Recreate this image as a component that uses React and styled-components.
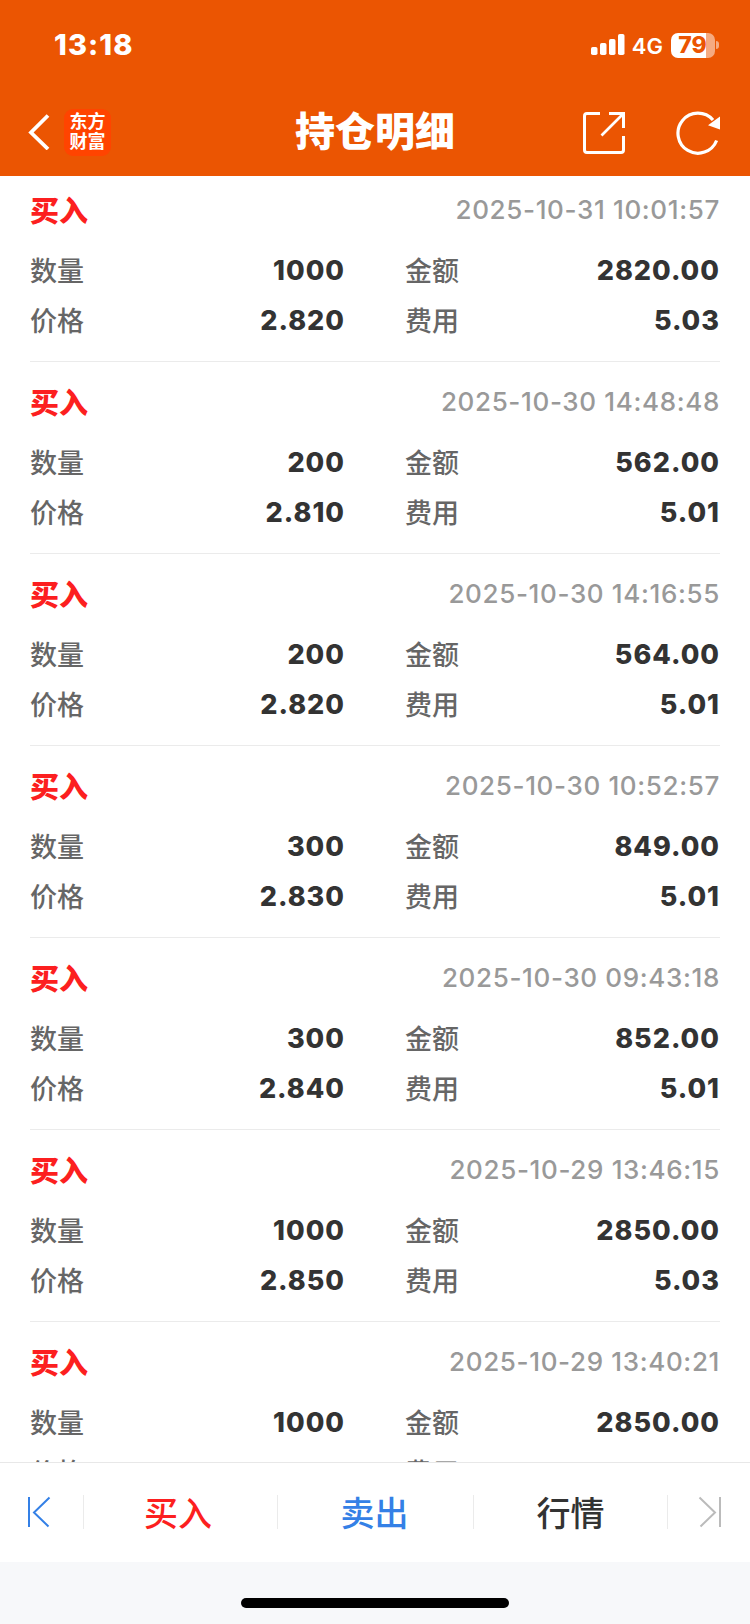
import React from "react";
import styled, { createGlobalStyle } from "styled-components";

const GlobalStyle = createGlobalStyle`
  * {
    box-sizing: border-box;
  }

  body {
    margin: 0;
    background-color: #ffffff;
    font-family: Inter, "Noto Sans CJK SC", sans-serif;
  }
`;

const Screen = styled.div`
  display: flex;
  flex-direction: column;
  width: 750px;
  height: 1624px;
  overflow: hidden;
  background-color: #ffffff;
`;

const Header = styled.header`
  flex: none;
  height: 176px;
  background-color: #eb5502;
  color: #ffffff;
`;

const StatusBar = styled.div`
  display: flex;
  align-items: center;
  justify-content: space-between;
  height: 88px;
  padding: 2px 31px 0 54px;
`;

const Clock = styled.span`
  font-size: 29px;
  font-weight: 800;
  line-height: 36px;
  letter-spacing: 1.1px;
`;

const StatusIcons = styled.div`
  display: flex;
  align-items: center;
`;

const Network = styled.span`
  margin: 2px 8px 0 7px;
  font-size: 22px;
  font-weight: 600;
  line-height: 26px;
`;

const Battery = styled.div`
  display: flex;
  align-items: center;
  justify-content: center;
  width: 44px;
  height: 25px;
  padding-right: 1px;
  border-radius: 7px;
  background: linear-gradient(to right, #ffffff 35px, #f5aa81 35px);
  color: #eb5502;
  font-size: 23px;
  font-weight: 800;
  line-height: 25px;
`;

const BatteryTip = styled.span`
  width: 3px;
  height: 8px;
  margin-left: 1px;
  border-radius: 0 3px 3px 0;
  background-color: #f5aa81;
`;

const NavBar = styled.div`
  display: grid;
  grid-template-columns: 1fr auto 1fr;
  align-items: center;
  height: 88px;
  padding: 0 30px 0 28px;
`;

const NavLeft = styled.div`
  display: flex;
  align-items: center;
  gap: 14px;
`;

const NavRight = styled.div`
  display: flex;
  align-items: center;
  justify-content: flex-end;
  gap: 51px;
  padding-top: 1px;
`;

const Logo = styled.div`
  width: 47px;
  height: 47px;
  padding-top: 1px;
  border-radius: 9px;
  background-color: #ff4400;
  font-family: "Noto Sans CJK SC", sans-serif;
  font-size: 18px;
  font-weight: 700;
  line-height: 20px;
  text-align: center;
`;

const Title = styled.h1`
  margin: 0 0 1px 2px;
  font-size: 40px;
  font-weight: 900;
  line-height: 56px;
`;

const List = styled.main`
  flex: 1;
  min-height: 0;
  padding: 0 30px;
  overflow: hidden;
`;

const Record = styled.section`
  height: 192px;
  padding-top: 12px;
  border-bottom: 1px solid #ebebeb;

  &:first-child {
    height: 186px;
    padding-top: 6px;
  }
`;

const RecordHead = styled.div`
  display: flex;
  align-items: center;
  justify-content: space-between;
  height: 63px;
  padding-bottom: 9px;
`;

const Side = styled.span`
  color: #fc1f20;
  font-size: 29px;
  font-weight: 900;
`;

const Time = styled.time`
  color: #999999;
  font-size: 26px;
  font-weight: 500;
  letter-spacing: 0.65px;
`;

const Fields = styled.dl`
  display: grid;
  grid-template-columns: 315px 315px;
  column-gap: 60px;
  margin: 0;
`;

const Field = styled.div`
  display: flex;
  align-items: center;
  justify-content: space-between;
  height: 50px;
`;

const Label = styled.dt`
  padding-bottom: 2px;
  color: #666666;
  font-size: 27px;
  font-weight: 500;
`;

const Value = styled.dd`
  margin: 1px 0 0;
  color: #333333;
  font-size: 27px;
  font-weight: 800;
  letter-spacing: 1px;
`;

const TabBar = styled.nav`
  flex: none;
  display: grid;
  grid-template-columns: 84px 194px 196px 194px 82px;
  height: 100px;
  border-top: 1px solid #e8e8e8;
`;

const Tab = styled.div`
  display: flex;
  align-items: center;
  justify-content: center;
  height: 34px;
  margin-top: 32px;
  padding: 0 ${(props) => props.$shift || 0}px 2px 0;
  border-right: ${(props) => (props.$last ? "none" : "1px solid #ebebeb")};
  color: ${(props) => props.$color};
  font-size: 34px;
  font-weight: 500;
`;

const EdgeTab = styled(Tab)`
  justify-content: ${(props) => (props.$last ? "flex-end" : "flex-start")};
  padding: ${(props) => (props.$last ? "0 28px 0 0" : "0 0 0 27px")};
`;

const HomeArea = styled.footer`
  flex: none;
  display: flex;
  justify-content: center;
  height: 62px;
  padding-top: 36px;
  background-color: #f7f8fa;
`;

const HomeIndicator = styled.div`
  width: 268px;
  height: 10px;
  border-radius: 5px;
  background-color: #000000;
`;

const records = [
  { time: "2025-10-31 10:01:57", count: "1000", amount: "2820.00", price: "2.820", fee: "5.03" },
  { time: "2025-10-30 14:48:48", count: "200", amount: "562.00", price: "2.810", fee: "5.01" },
  { time: "2025-10-30 14:16:55", count: "200", amount: "564.00", price: "2.820", fee: "5.01" },
  { time: "2025-10-30 10:52:57", count: "300", amount: "849.00", price: "2.830", fee: "5.01" },
  { time: "2025-10-30 09:43:18", count: "300", amount: "852.00", price: "2.840", fee: "5.01" },
  { time: "2025-10-29 13:46:15", count: "1000", amount: "2850.00", price: "2.850", fee: "5.03" },
  { time: "2025-10-29 13:40:21", count: "1000", amount: "2850.00", price: "2.850", fee: "5.03" },
];

const SignalIcon = () => (
  <svg width="34" height="22" viewBox="0 0 34 22" fill="#ffffff">
    <rect x="0" y="13" width="6.5" height="8" rx="1.8" />
    <rect x="9" y="9" width="6.5" height="12" rx="1.8" />
    <rect x="18" y="5" width="6.5" height="16" rx="1.8" />
    <rect x="27" y="0" width="6.5" height="21" rx="1.8" />
  </svg>
);

const BackIcon = () => (
  <svg width="22" height="36" viewBox="0 0 22 36" fill="none" stroke="#ffffff" strokeWidth="3.8">
    <path d="M20 1.5 3 18.5l17 16.5" />
  </svg>
);

const ShareIcon = () => (
  <svg width="42" height="42" viewBox="0 0 42 42" fill="none" stroke="#ffffff" strokeWidth="3">
    <path d="M17 1.5H4Q1.5 1.5 1.5 4v34q0 2.5 2.5 2.5h34q2.5 0 2.5-2.5V24" />
    <path d="M26 1.5h14.5V16" />
    <path d="M40 2 18.5 23.5" strokeWidth="2.6" />
  </svg>
);

const RefreshIcon = () => (
  <svg width="44" height="44" viewBox="0 0 44 44" fill="none">
    <path d="M40.6 29.5A20 20 0 1 1 37 9" stroke="#ffffff" strokeWidth="3.2" />
    <path d="M44 5.5v13L32 14.3z" fill="#ffffff" />
  </svg>
);

const FirstIcon = () => (
  <svg width="24" height="32" viewBox="0 0 24 32" fill="none" stroke="#3480e6" strokeWidth="2">
    <path d="M2 1v30" />
    <path d="M22.5 1.5 7 16.5l14.5 14" />
  </svg>
);

const LastIcon = () => (
  <svg width="24" height="32" viewBox="0 0 24 32" fill="none" stroke="#bbbbbb" strokeWidth="2">
    <path d="M22 1v30" />
    <path d="M1.5 1.5 17 16.5l-14.5 14" />
  </svg>
);

const RecordItem = ({ record }) => (
  <Record>
    <RecordHead>
      <Side>买入</Side>
      <Time>{record.time}</Time>
    </RecordHead>
    <Fields>
      <Field>
        <Label>数量</Label>
        <Value>{record.count}</Value>
      </Field>
      <Field>
        <Label>金额</Label>
        <Value>{record.amount}</Value>
      </Field>
      <Field>
        <Label>价格</Label>
        <Value>{record.price}</Value>
      </Field>
      <Field>
        <Label>费用</Label>
        <Value>{record.fee}</Value>
      </Field>
    </Fields>
  </Record>
);

const App = () => {
  return (
    <Screen lang="zh-CN">
      <GlobalStyle />
      <Header>
        <StatusBar>
          <Clock>13:18</Clock>
          <StatusIcons>
            <SignalIcon />
            <Network>4G</Network>
            <Battery>79</Battery>
            <BatteryTip />
          </StatusIcons>
        </StatusBar>
        <NavBar>
          <NavLeft>
            <BackIcon />
            <Logo>
              东方
              <br />
              财富
            </Logo>
          </NavLeft>
          <Title>持仓明细</Title>
          <NavRight>
            <ShareIcon />
            <RefreshIcon />
          </NavRight>
        </NavBar>
      </Header>
      <List>
        {records.map((record) => (
          <RecordItem key={record.time} record={record} />
        ))}
      </List>
      <TabBar>
        <EdgeTab>
          <FirstIcon />
        </EdgeTab>
        <Tab $color="#fc1f20" $shift={5}>
          买入
        </Tab>
        <Tab $color="#3480e6" $shift={2}>
          卖出
        </Tab>
        <Tab $color="#333333">行情</Tab>
        <EdgeTab $last>
          <LastIcon />
        </EdgeTab>
      </TabBar>
      <HomeArea>
        <HomeIndicator />
      </HomeArea>
    </Screen>
  );
};

export default App;
